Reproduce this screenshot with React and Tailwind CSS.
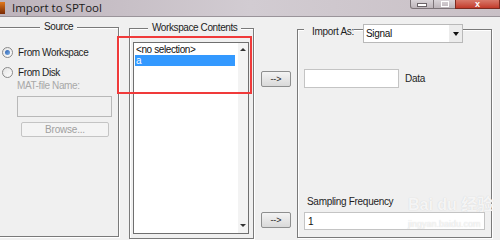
import React from 'react';

const ui = { fontFamily: '"Liberation Sans", Arial, sans-serif' };

function Frame({ label, className, labelClass, children }) {
  return (
    <div className={`relative border border-[#7a7a7a] shadow-[inset_1px_1px_0_#fff,1px_1px_0_#fff] ${className}`}>
      {label && (
        <span className={`absolute top-[-7px] bg-[#f0f0f0] px-[4px] text-[10px] leading-[12px] tracking-[-0.4px] text-[#222] ${labelClass}`}>
          {label}
        </span>
      )}
      {children}
    </div>
  );
}

function Radio({ checked, label }) {
  return (
    <div className="flex h-[12px] items-center gap-[5px]">
      <span className="flex h-[11px] w-[11px] items-center justify-center rounded-full border border-[#8a8a8a] bg-gradient-to-br from-[#e4e4e4] to-[#fdfdfd]">
        {checked && <span className="h-[5px] w-[5px] rounded-full bg-gradient-to-br from-[#2a5fb0] to-[#7fb0e6]" />}
      </span>
      <span className="text-[10px] tracking-[-0.4px] text-[#1e1e1e]">{label}</span>
    </div>
  );
}

function ArrowButton({ className }) {
  return (
    <div className={`flex h-[16px] w-[30px] items-center justify-center rounded-[2px] border border-[#8e8f8f] bg-gradient-to-b from-[#f4f4f4] to-[#d9d9d9] text-[9px] leading-[10px] text-[#222] ${className}`}>
      --&gt;
    </div>
  );
}

export default function App() {
  return (
    <div className="relative h-[240px] w-[500px] overflow-hidden bg-[#f0f0f0]" style={ui}>
      {/* title bar */}
      <div className="flex h-[17px] items-start border-b border-[#9a949a] bg-gradient-to-r from-[#bdb3bb] via-[#d2ccd2] to-[#c9c0c6]">
        <div className="mt-[2px] h-[12px] w-[5px] bg-gradient-to-b from-[#e0781c] to-[#7a2a05]" />
        <span className="ml-[7px] mt-[1px] text-[11.5px] leading-[14px] text-[#1a1a1a]" style={{ fontFamily: '"Open Sans", "Liberation Sans", sans-serif' }}>
          Import to SPTool
        </span>
        <div className="ml-auto flex h-[9px]">
          <div className="flex w-[24px] items-center justify-center rounded-bl-[3px] border border-t-0 border-[#7c7478] bg-gradient-to-b from-[#d9d4d8] to-[#bdb5ba]">
            <span className="mt-[2px] h-[2px] w-[8px] bg-white shadow-[0_0_0_1px_#6b6468]" />
          </div>
          <div className="flex w-[21px] items-center justify-center border-b border-[#7c7478] bg-gradient-to-b from-[#d9d4d8] to-[#bdb5ba]">
            <span className="h-[6px] w-[8px] border border-white" />
          </div>
          <div className="flex w-[45px] items-center justify-center border border-t-0 border-[#7d2a20] bg-gradient-to-b from-[#d8786a] to-[#c2392a]">
            <span className="text-[9px] font-bold leading-[8px] text-white">x</span>
          </div>
        </div>
      </div>

      {/* client */}
      <div className="flex items-start">
        {/* Source */}
        <Frame label="Source" className="ml-[-3px] mt-[10px] h-[210px] w-[122px]" labelClass="left-[42px]">
          <div className="flex flex-col pl-[4px] pt-[18px]">
            <Radio checked label="From Workspace" />
            <div className="mt-[8px]">
              <Radio label="From Disk" />
            </div>
            <span className="ml-[15px] mt-[2px] text-[10px] leading-[12px] tracking-[-0.4px] text-[#a8a8a8]">MAT-file Name:</span>
            <div className="ml-[15px] mt-[4px] h-[21px] w-[95px] border border-[#b8b8b8] bg-[#f0f0f0]" />
            <div className="ml-[19px] mt-[5px] flex h-[15px] w-[88px] items-center justify-center rounded-[2px] border border-[#c4c4c4] bg-[#f4f4f4] text-[10px] tracking-[-0.2px] text-[#a0a0a0]">
              Browse...
            </div>
          </div>
        </Frame>

        {/* Workspace Contents */}
        <Frame label="Workspace Contents" className="ml-[10px] mt-[11px] h-[211px] w-[125px]" labelClass="left-[18px]">
          <div className="ml-[3px] mt-[13px] flex h-[192px] w-[116px] border border-[#6f6f6f] bg-white">
            <div className="flex flex-1 flex-col pl-[1px] pt-[1px]">
              <div className="h-[11px] pl-[1px] text-[10px] leading-[11px] tracking-[-0.4px] text-[#111]">&lt;no selection&gt;</div>
              <div className="h-[11px] w-[100px] bg-[#3399ff] pl-[1px] text-[10px] leading-[11px] text-white">a</div>
            </div>
            <div className="flex w-[10px] flex-col items-center justify-between bg-[#f3f3f3] py-[5px]">
              <span className="h-0 w-0 border-x-[3px] border-b-[3px] border-x-transparent border-b-[#333]" />
              <span className="mb-[1px] h-0 w-0 border-x-[3px] border-t-[3px] border-x-transparent border-t-[#333]" />
            </div>
          </div>
        </Frame>

        {/* arrow buttons */}
        <div className="flex h-[212px] w-[43px] flex-col justify-between pl-[7px] pt-[54px]">
          <ArrowButton />
          <ArrowButton className="mb-[1px]" />
        </div>

        {/* Import As */}
        <Frame className="mt-[12px] h-[209px] w-[195px]">
          <div className="absolute left-[6px] top-[-6px] flex items-start bg-[#f0f0f0] pl-[8px]">
            <span className="mt-[2px] text-[10px] leading-[12px] tracking-[-0.3px] text-[#1e1e1e]">Import As:</span>
          </div>
          <div className="absolute left-[65px] top-[-6px] flex h-[19px] w-[100px] items-center border border-[#b9b9b9] bg-white pl-[2px]">
            <span className="flex-1 text-[10px] tracking-[-0.3px] text-[#111]">Signal</span>
            <div className="flex h-full w-[13px] items-center justify-center bg-[#ececec]">
              <span className="h-0 w-0 border-x-[3px] border-t-[4px] border-x-transparent border-t-[#111]" />
            </div>
          </div>
          <div className="flex h-full flex-col pl-[6px]">
            <div className="mt-[39px] flex items-center gap-[6px]">
              <div className="h-[19px] w-[95px] border border-[#c4c4c4] bg-white" />
              <span className="text-[10px] tracking-[-0.3px] text-[#1e1e1e]">Data</span>
            </div>
            <div className="flex-1" />
            <span className="ml-[3px] text-[10px] leading-[12px] tracking-[-0.3px] text-[#1e1e1e]">Sampling Frequency</span>
            <div className="mb-[7px] mt-[4px] flex h-[18px] w-[181px] items-center border border-[#c4c4c4] bg-white pl-[3px] text-[10px] text-[#111]">
              1
            </div>
          </div>
        </Frame>
      </div>

      {/* red highlight */}
      <div className="absolute left-[117px] top-[36px] h-[58px] w-[135px] border-2 border-[#f03a3a]" />

      {/* watermark */}
      <div className="pointer-events-none absolute left-[408px] top-[196px] flex flex-col items-start text-white/80 [text-shadow:0_0_1px_#c8c8c8]">
        <span className="text-[16px] font-bold leading-[18px]" style={{ fontFamily: '"Liberation Sans", "Noto Sans CJK SC", sans-serif' }}>Bai du 经验</span>
        <span className="mt-[5px] text-[9px] leading-[10px]">jingyan.baidu.com</span>
      </div>
    </div>
  );
}
